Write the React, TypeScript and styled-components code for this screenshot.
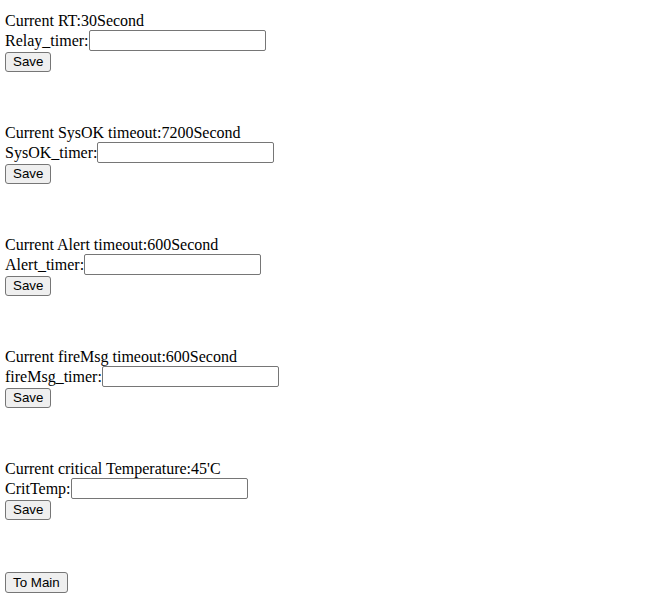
import styled, { createGlobalStyle } from 'styled-components';

const GlobalStyle = createGlobalStyle`
  body {
    margin: 0;
    background: #ffffff;
    color: #000000;
    font-family: "Liberation Serif", "Times New Roman", serif;
    font-size: 16px;
  }
`;

const Page = styled.div`
  display: flex;
  flex-direction: column;
  gap: 51px;
  padding: 11px 5px 0;
`;

const Block = styled.form`
  display: flex;
  flex-direction: column;
  align-items: flex-start;
`;

const Current = styled.div`
  height: 19px;
  line-height: 19px;
  white-space: nowrap;
`;

const Row = styled.div`
  display: flex;
  align-items: center;
  height: 21px;
  margin-bottom: 1px;
`;

const Label = styled.label`
  line-height: 21px;
  white-space: nowrap;
`;

const Input = styled.input`
  box-sizing: border-box;
  width: 177px;
  height: 21px;
  margin: 0;
  padding: 1px 2px;
  border: 1px solid #767676;
  border-radius: 2px;
  background: #ffffff;
  font-family: "Liberation Sans", Arial, sans-serif;
  font-size: 13.33px;
`;

const Button = styled.button<{ $wide?: boolean }>`
  box-sizing: border-box;
  height: ${(p) => (p.$wide ? '21px' : '20px')};
  margin: 0;
  padding: 0 7px;
  border: 1px solid #767676;
  border-radius: 3px;
  background: #efefef;
  color: #000000;
  font-family: "Liberation Sans", Arial, sans-serif;
  font-size: 13.33px;
  line-height: 18px;
  cursor: pointer;
`;

const Footer = styled.div`
  padding-top: 1px;
`;

interface Setting {
  current: string;
  label: string;
}

const settings: Setting[] = [
  { current: 'Current RT:30Second', label: 'Relay_timer:' },
  { current: 'Current SysOK timeout:7200Second', label: 'SysOK_timer:' },
  { current: 'Current Alert timeout:600Second', label: 'Alert_timer:' },
  { current: 'Current fireMsg timeout:600Second', label: 'fireMsg_timer:' },
  { current: "Current critical Temperature:45'C", label: 'CritTemp:' },
];

export default function App() {
  return (
    <>
      <GlobalStyle />
      <Page>
        {settings.map((s) => (
          <Block key={s.label} onSubmit={(e) => e.preventDefault()}>
            <Current>{s.current}</Current>
            <Row>
              <Label>{s.label}</Label>
              <Input type="text" />
            </Row>
            <Button type="submit">Save</Button>
          </Block>
        ))}
        <Footer>
          <Button $wide type="button">
            To Main
          </Button>
        </Footer>
      </Page>
    </>
  );
}
